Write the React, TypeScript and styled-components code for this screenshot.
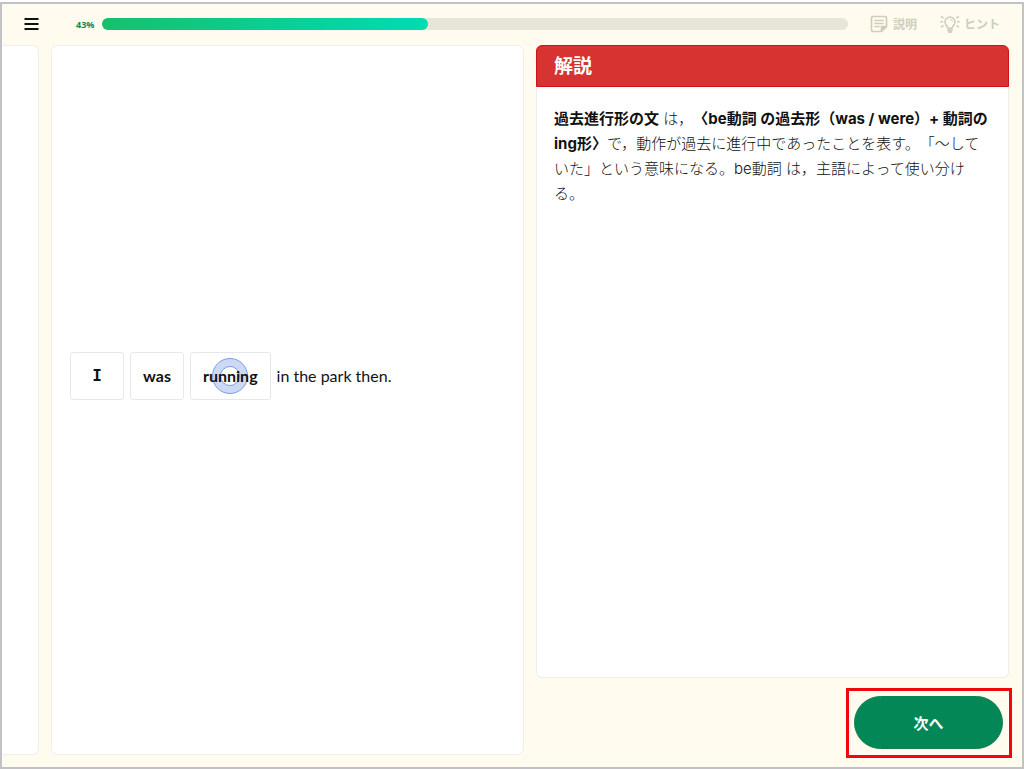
import React from 'react';
import styled, { createGlobalStyle } from 'styled-components';

const GlobalStyle = createGlobalStyle`
  *, *::before, *::after { box-sizing: border-box; }
  body {
    margin: 0;
    background: #fff;
    color: #111;
    font-family: Lato, "Noto Sans CJK JP", sans-serif;
    font-size: 15px;
  }
`;

const Page = styled.div`
  min-height: 100vh;
  padding: 2px 0 0;
  display: flex;
`;

const Frame = styled.div`
  flex: 1;
  min-width: 0;
  display: flex;
  flex-direction: column;
  border: 2px solid #c2c1c5;
  background: #fffbef;
`;

const TopBar = styled.header`
  height: 41px;
  flex: none;
  display: flex;
  align-items: center;
  padding: 0 22px 1px;
`;

const MenuButton = styled.button`
  display: flex;
  padding: 0;
  border: 0;
  background: none;
  color: #111;
`;

const Progress = styled.div`
  flex: 1;
  display: flex;
  align-items: center;
  gap: 6px;
  margin: 0 21px 0 37px;
`;

const Percent = styled.span`
  width: 20px;
  color: #17864f;
  font-family: "Open Sans", sans-serif;
  font-size: 9px;
  font-weight: 700;
  white-space: nowrap;
`;

const Track = styled.div`
  flex: 1;
  height: 12px;
  border-radius: 6px;
  background: #e7e5d9;
`;

const Fill = styled.div`
  height: 100%;
  border-radius: 6px;
  background: linear-gradient(90deg, #16c06c, #00dbb5);
`;

const Tools = styled.div`
  display: flex;
  gap: 23px;
`;

const Tool = styled.button`
  display: flex;
  align-items: center;
  gap: 4px;
  padding: 0;
  border: 0;
  background: none;
  color: #d0cdbd;
  font: 700 12px/20px "Noto Sans CJK JP", sans-serif;
`;

const Board = styled.main`
  flex: 1;
  display: grid;
  grid-template-columns: 37px minmax(0, 1fr) minmax(0, 1fr);
  column-gap: 12px;
  padding: 0 13px 12px 0;
`;

const Panel = styled.section`
  border: 1px solid #eeeeec;
  border-radius: 6px;
  background: #fff;
`;

const PreviousPanel = styled(Panel)`
  border-left: 0;
  border-radius: 0 6px 6px 0;
`;

const QuestionPanel = styled(Panel)`
  display: flex;
  align-items: center;
  padding: 0 18px 48px;
`;

const Sentence = styled.div`
  display: flex;
  align-items: center;
  gap: 6px;
  font-size: 16px;
`;

const Word = styled.button<{ $serifed?: boolean }>`
  position: relative;
  min-width: 54px;
  height: 48px;
  padding: 0 12px 2px;
  border: 1px solid #e6e9e9;
  border-radius: 3px;
  background: #fff;
  color: #111;
  font-family: ${({ $serifed }) => ($serifed ? '"DejaVu Sans Mono", monospace' : 'Lato, sans-serif')};
  font-size: 16px;
  font-weight: 700;
`;

const RestOfSentence = styled.span`
  padding-bottom: 2px;
`;

const TouchMark = styled.span`
  position: absolute;
  inset: 0;
  margin: auto;
  width: 36px;
  height: 36px;
  border: 1px solid #7d9be6;
  border-radius: 50%;
  background: rgba(110, 145, 225, 0.35);
  &::after {
    content: "";
    position: absolute;
    inset: 0;
    margin: auto;
    width: 20px;
    height: 20px;
    border: 1px solid #7d9be6;
    border-radius: 50%;
    background: #fff;
  }
`;

const WordText = styled.span`
  position: relative;
  z-index: 1;
`;

const SideColumn = styled.div`
  display: flex;
  flex-direction: column;
`;

const NotePanel = styled(Panel)`
  flex: 1;
  border-top: 0;
`;

const NoteTitle = styled.h1`
  margin: 0 -1px;
  height: 42px;
  padding: 0 17px;
  border: 1px solid #d01217;
  border-radius: 6px 6px 0 0;
  background: #d63331;
  color: #fff;
  font-size: 19px;
  font-weight: 700;
  line-height: 40px;
`;

const NoteText = styled.p`
  margin: 0;
  padding: 19px 17px;
  font-family: Inter, "Noto Sans CJK JP", sans-serif;
  font-weight: 300;
  line-height: 25px;
  text-spacing-trim: space-all;
  b { font-weight: 700; }
`;

const Highlight = styled.div`
  align-self: flex-end;
  margin: 10px -3px -3px 0;
  padding: 5px 6px 6px 5px;
  border: 3px solid #f0060c;
`;

const NextButton = styled.button`
  display: block;
  width: 149px;
  height: 53px;
  border: 1px solid #14804f;
  border-radius: 27px;
  background: #048757;
  color: #fff;
  font: 700 15px "Noto Sans CJK JP", sans-serif;
`;

export default function App() {
  const percent = 43;
  return (
    <Page>
      <GlobalStyle />
      <Frame>
        <TopBar>
          <MenuButton aria-label="メニュー">
            <svg width="15" height="12" viewBox="0 0 15 12" stroke="currentColor" strokeWidth="2">
              <path d="M.5 1h14M.5 6h14M.5 11h14" />
            </svg>
          </MenuButton>
          <Progress>
            <Percent>{percent}%</Percent>
            <Track role="progressbar" aria-valuenow={percent} aria-label="進捗">
              <Fill style={{ width: `${percent + 0.7}%` }} />
            </Track>
          </Progress>
          <Tools>
            <Tool>
              <svg width="20" height="20" viewBox="0 0 20 20" fill="none" stroke="currentColor" strokeWidth="1.7" strokeLinecap="round" strokeLinejoin="round">
                <path d="M4 2.500h12a1.500 1.500 0 0 1 1.500 1.500v8.500l-5 5H4A1.500 1.500 0 0 1 2.500 16V4A1.500 1.500 0 0 1 4 2.500z" />
                <path d="M6 6.500h8M6 9.500h8M6 12.500h4" />
                <path d="M12.500 17v-4.500H17z" fill="currentColor" />
              </svg>
              説明
            </Tool>
            <Tool>
              <svg width="20" height="20" viewBox="0 0 20 20" fill="none" stroke="currentColor" strokeWidth="1.6" strokeLinecap="round" strokeLinejoin="round">
                <path d="M8 14.200c0-1.800-3-2.800-3-6.200a5 5 0 0 1 10 0c0 3.400-3 4.400-3 6.200z" />
                <path d="M10.500 5.300a2.500 2.500 0 0 1 2 2" strokeWidth="1" />
                <path d="M8 16.300h4M9 18h2" strokeWidth="2" />
                <path d="M.8 7.800h1.600M17.600 7.800h1.600M1.600 2.800l1.500.9M18.400 2.800l-1.500.9M1.600 12.800l1.500-.9M18.400 12.800l-1.500-.9" />
              </svg>
              ヒント
            </Tool>
          </Tools>
        </TopBar>
        <Board>
          <PreviousPanel />
          <QuestionPanel>
            <Sentence>
              <Word $serifed>I</Word>
              <Word>was</Word>
              <Word>
                <TouchMark />
                <WordText>running</WordText>
              </Word>
              <RestOfSentence>in the park then.</RestOfSentence>
            </Sentence>
          </QuestionPanel>
          <SideColumn>
            <NotePanel>
              <NoteTitle>解説</NoteTitle>
              <NoteText>
                <b>過去進行形の文</b> は，<b>〈be動詞 の過去形（was / were）+ 動詞のing形〉</b>
                で，動作が過去に進行中であったことを表す。「～していた」という意味になる。be動詞 は，主語によって使い分ける。
              </NoteText>
            </NotePanel>
            <Highlight>
              <NextButton>次へ</NextButton>
            </Highlight>
          </SideColumn>
        </Board>
      </Frame>
    </Page>
  );
}
